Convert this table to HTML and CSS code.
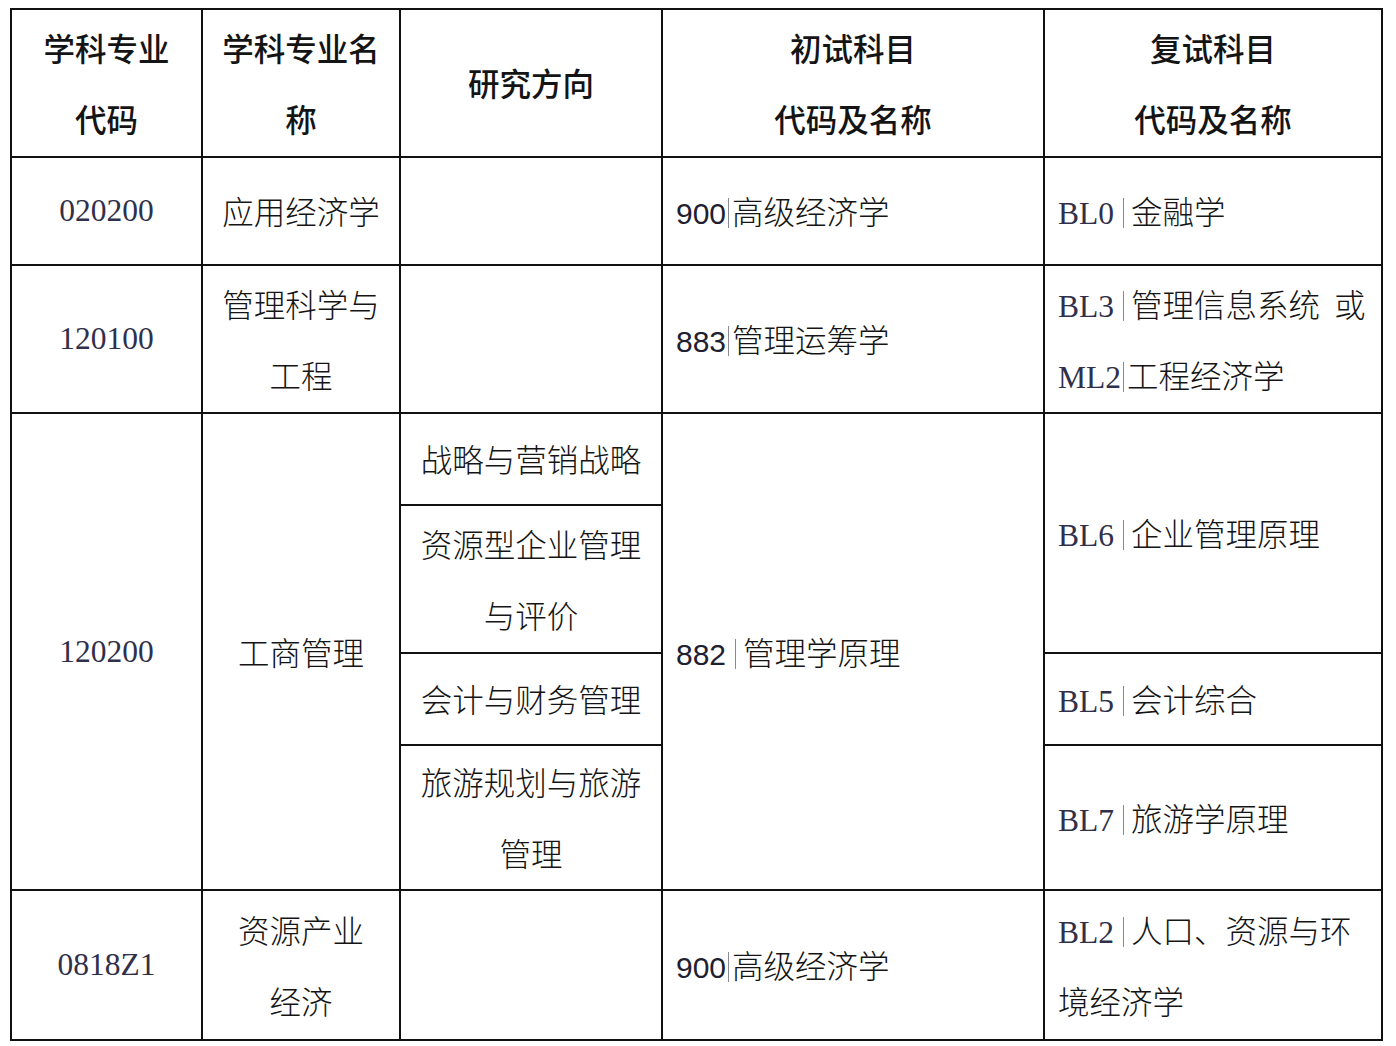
FILE: index.html
```html
<!DOCTYPE html>
<html lang="zh-CN">
<head>
<meta charset="utf-8">
<title>专业目录</title>
<link rel="stylesheet" href="styles.css">
</head>
<body>
<table class="grid">
  <colgroup>
    <col class="c1"><col class="c2"><col class="c3"><col class="c4"><col class="c5">
  </colgroup>
  <thead>
    <tr class="h-head">
      <th>学科专业<br>代码</th>
      <th>学科专业名<br>称</th>
      <th>研究方向</th>
      <th>初试科目<br>代码及名称</th>
      <th>复试科目<br>代码及名称</th>
    </tr>
  </thead>
  <tbody>
    <tr class="h-r1">
      <td class="code">020200</td>
      <td class="ctr">应用经济学</td>
      <td></td>
      <td><span class="sans">900</span><span class="bar tight"></span>高级经济学</td>
      <td><span class="code">BL0</span><span class="bar"></span>金融学</td>
    </tr>
    <tr class="h-r2">
      <td class="code">120100</td>
      <td class="ctr">管理科学与<br>工程</td>
      <td></td>
      <td><span class="sans">883</span><span class="bar tight"></span>管理运筹学</td>
      <td><span class="code">BL3</span><span class="bar"></span>管理信息系统&nbsp;&nbsp;或<br><span class="code">ML2</span><span class="bar tight"></span>工程经济学</td>
    </tr>
    <tr class="h-r3a">
      <td class="code" rowspan="4">120200</td>
      <td class="ctr" rowspan="4">工商管理</td>
      <td class="ctr">战略与营销战略</td>
      <td rowspan="4"><span class="sans">882</span><span class="bar"></span>管理学原理</td>
      <td rowspan="2"><span class="code">BL6</span><span class="bar"></span>企业管理原理</td>
    </tr>
    <tr class="h-r3b">
      <td class="ctr">资源型企业管理<br>与评价</td>
    </tr>
    <tr class="h-r3c">
      <td class="ctr">会计与财务管理</td>
      <td><span class="code">BL5</span><span class="bar"></span>会计综合</td>
    </tr>
    <tr class="h-r3d">
      <td class="ctr">旅游规划与旅游<br>管理</td>
      <td><span class="code">BL7</span><span class="bar"></span>旅游学原理</td>
    </tr>
    <tr class="h-r4">
      <td class="code">0818Z1</td>
      <td class="ctr">资源产业<br>经济</td>
      <td></td>
      <td><span class="sans">900</span><span class="bar tight"></span>高级经济学</td>
      <td><span class="code">BL2</span><span class="bar"></span>人口、资源与环<br>境经济学</td>
    </tr>
  </tbody>
</table>
</body>
</html>
```

FILE: styles.css
```css
html, body {
  margin: 0;
  padding: 0;
  background: #ffffff;
}

body {
  padding: 8px 0 0 10px;
  font-family: "Noto Sans CJK SC", "Noto Sans", sans-serif;
  font-size: 31.5px;
  color: #141414;
}

.grid {
  border-collapse: collapse;
  table-layout: fixed;
  width: 1371px;
}

.c1 { width: 191px; }
.c2 { width: 198px; }
.c3 { width: 262px; }
.c4 { width: 382px; }
.c5 { width: 338px; }

.grid th,
.grid td {
  border: 2px solid #111111;
  padding: 0 13px 1px;
  line-height: 71px;
  vertical-align: middle;
  text-align: left;
  font-weight: 300;
  white-space: nowrap;
}

.grid th {
  text-align: center;
  font-weight: 500;
}

.grid td.ctr,
.grid td.code {
  text-align: center;
}

.code {
  font-family: "Liberation Serif", "Times New Roman", serif;
  color: #30304a;
  font-weight: 400;
}

span.code,
span.sans {
  line-height: 1;
}

.sans {
  font-family: "Liberation Sans", Arial, sans-serif;
  color: #202030;
  font-weight: 400;
  font-size: 30px;
}

.bar {
  display: inline-block;
  width: 1px;
  height: 30px;
  background: #8a8a96;
  vertical-align: -4px;
  margin: 0 7px 0 9px;
}

.bar.tight {
  margin: 0 3px 0 2px;
}

.h-head { height: 148px; }
.h-r1 { height: 108px; }
.h-r2 { height: 148px; }
.h-r3a { height: 92px; }
.h-r3b { height: 148px; }
.h-r3c { height: 92px; }
.h-r3d { height: 145px; }
.h-r4 { height: 150px; }
```
